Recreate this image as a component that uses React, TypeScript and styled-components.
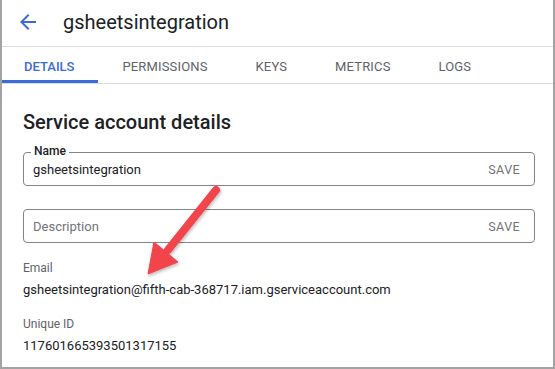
import React from "react";
import styled, { createGlobalStyle } from "styled-components";

const Global = createGlobalStyle`
  html, body { margin: 0; padding: 0; background: #fff; }
  body { font-family: Roboto, "Liberation Sans", sans-serif; color: #202124; }
`;

const Frame = styled.div`
  position: relative;
  width: 555px;
  height: 369px;
  box-sizing: border-box;
  border: 2px solid #a3a3a3;
  border-top: none;
  overflow: hidden;
`;

const Header = styled.div`
  display: flex;
  align-items: center;
  height: 46px;
  padding-left: 14px;
  border-bottom: 1px solid #dadce0;
`;

const Back = styled.div`
  display: flex;
  width: 24px;
  height: 24px;
  margin-right: 23px;
  margin-top: -3px;
`;

const PageTitle = styled.div`
  font-size: 20px;
  color: #202124;
  margin-top: -3px;
`;

const Tabs = styled.div`
  display: flex;
  height: 36px;
  margin-left: -2px;
  border-bottom: 1px solid #dadce0;
`;

const Tab = styled.div<{ active?: boolean }>`
  display: flex;
  align-items: center;
  padding: 2px 24px 0 24px;
  font-size: 13px;
  font-weight: ${p => (p.active ? 500 : 400)};
  letter-spacing: ${p => (p.active ? "0" : "0.15px")};
  color: ${p => (p.active ? "#3b6bd6" : "#5f6368")};
  box-shadow: ${p => (p.active ? "inset 0 -3px 0 #3b6bd6" : "none")};
`;

const Content = styled.div`
  padding: 26px 18px 0 21px;
`;

const Heading = styled.div`
  font-size: 20px;
  font-weight: 500;
  line-height: 24px;
  color: #202124;
  margin-bottom: 18px;
`;

const Field = styled.div`
  position: relative;
  display: flex;
  align-items: center;
  height: 34px;
  box-sizing: border-box;
  border: 1px solid #80868b;
  border-radius: 4px;
  padding: 0 14px 0 9px;
  margin-bottom: 23px;
`;

const FieldLabel = styled.span`
  position: absolute;
  left: 7px;
  top: -9px;
  padding: 0 3px;
  background: #fff;
  font-size: 12px;
  font-weight: 500;
  line-height: 14px;
  color: #202124;
`;

const FieldValue = styled.span<{ placeholder?: boolean }>`
  flex: 1;
  font-size: 13px;
  color: ${p => (p.placeholder ? "#70757a" : "#202124")};
`;

const Save = styled.span`
  font-size: 12.5px;
  font-weight: 400;
  color: #6f7479;
  letter-spacing: 0.4px;
`;

const InfoLabel = styled.div`
  margin-top: -6px;
  font-size: 12px;
  line-height: 16px;
  color: #5f6368;
`;

const InfoValue = styled.div`
  font-size: 13px;
  line-height: 20px;
  margin-top: 4px;
  margin-bottom: 22px;
  color: #202124;
`;

const Overlay = styled.svg`
  position: absolute;
  left: 0;
  top: 0;
  pointer-events: none;
`;

export default function App() {
  return (
    <>
      <Global />
      <Frame>
        <Header>
          <Back>
            <svg width="24" height="24" viewBox="0 0 24 24">
              <path d="M20 11H7.83l5.59-5.59L12 4l-8 8 8 8 1.41-1.41L7.83 13H20v-2z" fill="#3b6bd6" />
            </svg>
          </Back>
          <PageTitle>gsheetsintegration</PageTitle>
        </Header>
        <Tabs>
          <Tab active>DETAILS</Tab>
          <Tab>PERMISSIONS</Tab>
          <Tab>KEYS</Tab>
          <Tab>METRICS</Tab>
          <Tab>LOGS</Tab>
        </Tabs>
        <Content>
          <Heading>Service account details</Heading>
          <Field>
            <FieldLabel>Name</FieldLabel>
            <FieldValue>gsheetsintegration</FieldValue>
            <Save>SAVE</Save>
          </Field>
          <Field>
            <FieldValue placeholder>Description</FieldValue>
            <Save>SAVE</Save>
          </Field>
          <InfoLabel>Email</InfoLabel>
          <InfoValue>gsheetsintegration@fifth-cab-368717.iam.gserviceaccount.com</InfoValue>
          <InfoLabel>Unique ID</InfoLabel>
          <InfoValue>117601665393501317155</InfoValue>
        </Content>
        <Overlay width="555" height="369">
          <defs>
            <filter id="sh" x="-20%" y="-20%" width="140%" height="140%">
              <feDropShadow dx="1" dy="2" stdDeviation="1.5" floodColor="#000" floodOpacity="0.25" />
            </filter>
          </defs>
          <g filter="url(#sh)" fill="#f2444b" stroke="#f2444b">
            <line x1="214" y1="190" x2="166" y2="250" strokeWidth="8" strokeLinecap="round" />
            <polygon points="146,274 152,242 176,262" strokeWidth="1" strokeLinejoin="round" />
          </g>
        </Overlay>
      </Frame>
    </>
  );
}
